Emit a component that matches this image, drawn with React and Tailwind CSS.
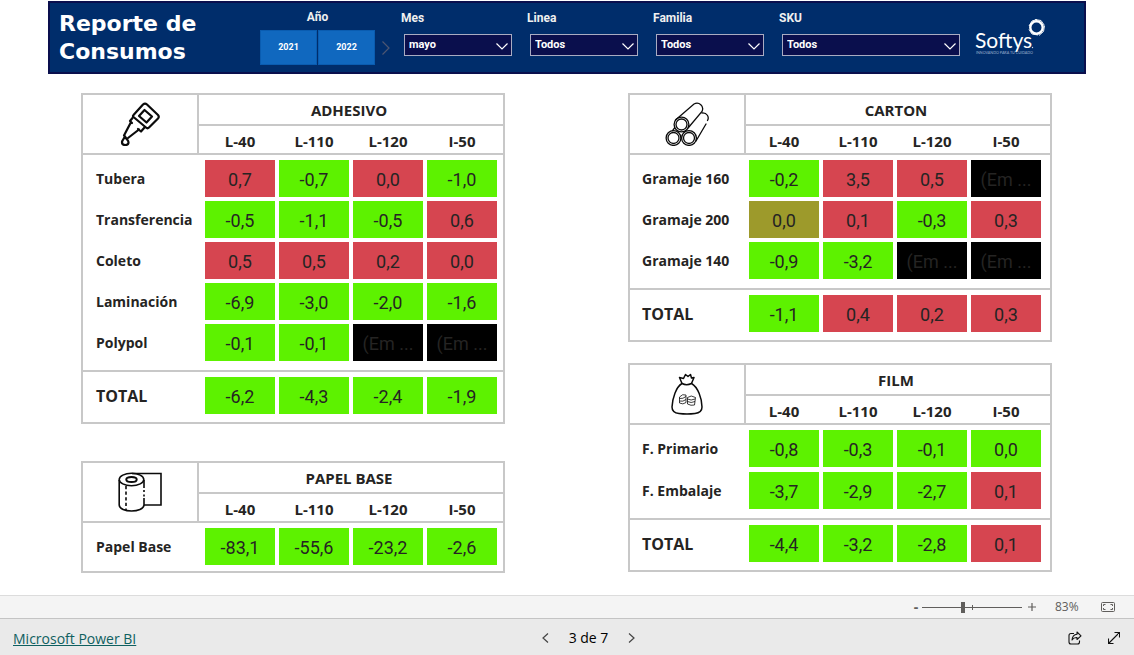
import React from "react";

const GREEN = "bg-[#5df200]";
const RED = "bg-[#d64550]";
const OLIVE = "bg-[#9d9a2b]";
const BLACK = "bg-black";
const tones = { g: GREEN, r: RED, o: OLIVE, k: BLACK };

const LINES = ["L-40", "L-110", "L-120", "I-50"];

const leftPads = ["pl-[6px] pr-[2px]", "px-[2px]", "px-[2px]", "pl-[2px] pr-[6px]"];
const rightPads = ["pl-[3px] pr-[2px]", "px-[2px]", "px-[2px]", "pl-[2px] pr-[9px]"];

const leftCols = ["w-[18.57%]", "w-[17.62%]", "w-[17.62%]"];
const rightCols = ["w-[17.86%]", "w-[17.62%]", "w-[17.62%]"];

function GlueIcon() {
  return (
    <svg viewBox="0 0 40 44" className="h-11 w-10" fill="none" stroke="#0b0b0b" strokeWidth="2.2" strokeLinejoin="round" strokeLinecap="round" aria-hidden="true">
      <path d="M13.500 13 L23 2.500 Q25 0.800 27 2.500 L38 13 Q39.500 14.700 38 16.500 L29 25.500 Q27.500 27 26 25.500 L13.500 15 Q12.500 14 13.500 13z" />
      <path d="M24.500 8 L32 14.500 L26.500 20.500 L19 14z" />
      <path d="M12.500 16 L10 19 L12 21 M18 27 L21 29.500 L24.500 25.500 M10.800 20.500 L4 33.500 M19 27.500 L8 36" />
      <path d="M5 34.500 C4 37 2 38 2 40.200 C2 44 8.500 44 8.500 40.200 C8.500 38 6 37 5 34.500z" />
    </svg>
  );
}

function RollIcon() {
  return (
    <svg viewBox="0 0 44 40" className="h-10 w-11" fill="none" stroke="#0b0b0b" strokeWidth="1.600" aria-hidden="true">
      <ellipse cx="13.500" cy="7.500" rx="12.300" ry="6.200" />
      <ellipse cx="13.500" cy="7.500" rx="5.200" ry="2.500" strokeWidth="2" />
      <path d="M1.200 8 V33 C1.500 41 25.500 41 26 33 V26 M26 8 V16 M26 18 V20 M26 22.500 V24.500" />
      <path d="M14 1.500 H43 V33 H26" />
      <path d="M8 14 V38" strokeDasharray="3.200 2.400" />
    </svg>
  );
}

function TubesIcon() {
  return (
    <svg viewBox="0 0 44 44" className="h-11 w-11" fill="none" stroke="#0b0b0b" strokeWidth="1.300" strokeLinecap="round" aria-hidden="true">
      {[[16.500, 22.500], [8.500, 36], [24, 36]].map(([x, y]) => (
        <g key={x}>
          <circle cx={x} cy={y} r="7.400" />
          <circle cx={x} cy={y} r="5.500" />
        </g>
      ))}
      <path d="M10.500 18 L29 2 C34 -0.500 39.500 4 37 9.500 L23.500 25.500" />
      <path d="M37 11 C42 10.500 44.500 15 42.500 18.500 M41 22 L31 39 M7.500 28.600 L9.500 26" />
    </svg>
  );
}

function BagIcon() {
  return (
    <svg viewBox="0 0 32 42" className="h-[42px] w-8" fill="none" stroke="#0b0b0b" strokeWidth="1.500" strokeLinejoin="round" aria-hidden="true">
      <path d="M11 10.500 L8.500 4.500 L12.500 5.500 L14.500 1.500 L17 3.500 L19.500 1.500 L20.500 5 L23 4.500 L20.500 10.500" />
      <path d="M11 10.500 Q15.500 13 20.500 10.500 C27 14 31 26 31 34 C31 38 28 40 24 40.500 Q16 41.500 8 40.500 C3.500 40 1 38 1 34 C1.500 25 5 14 11 10.500z" />
      <path d="M8.500 24 Q11.500 20.500 15 22 V29.500 Q12 32 8.500 30z M8.500 25.500 Q12 26 15 23.500 M8.500 28 Q12 29 15 26.500 M16.500 24.500 Q20 21.500 24.500 24.500 L23.500 32 Q20 33 16.500 31z M16.500 26 Q20 28 24 26 M16.500 28.500 Q20 30.500 24 28.500" strokeWidth="0.800" />
    </svg>
  );
}

function Panel({ title, icon, rows, total, side, roomy }) {
  const pads = side === "left" ? leftPads : rightPads;
  const cols = side === "left" ? leftCols : rightCols;
  const indent = side === "left" ? "pl-[13px]" : "pl-3";

  const cells = (values, vertical) =>
    values.map(([text, tone], i) => (
      <td key={i} className={`${vertical} ${pads[i]}`}>
        <div className={`flex h-[37px] items-center justify-center whitespace-nowrap pt-0.5 font-[Roboto,sans-serif] text-lg text-[#252423] ${tones[tone]}`}>
          {text}
        </div>
      </td>
    ));

  return (
    <table className="w-full table-fixed border-separate border-spacing-0 border-2 border-[#c8c8c8] text-[#252423]">
      <colgroup>
        <col className="w-[27.62%]" />
        {cols.map((c, i) => (
          <col key={i} className={c} />
        ))}
        <col />
      </colgroup>
      <thead className="text-[15px] leading-5">
        <tr>
          <td rowSpan={2} className="border-r-2 border-b-2 border-[#c8c8c8] p-0">
            <div className="flex justify-center">{icon}</div>
          </td>
          <th colSpan={4} scope="colgroup" className="h-[31px] border-b-2 border-[#c8c8c8] p-0 pr-1 font-bold">
            {title}
          </th>
        </tr>
        <tr>
          {LINES.map((l, i) => (
            <th key={l} scope="col" className={`h-[29px] border-b-2 border-[#c8c8c8] pt-0.5 pb-0 font-bold ${pads[i]}`}>
              {l}
            </th>
          ))}
        </tr>
      </thead>
      <tbody>
        {rows.map(([name, values], i) => {
          const top = i === 0 ? "pt-[5px]" : "pt-[2px]";
          const bottom = i === rows.length - 1 ? (total ? "pb-[9px]" : "pb-[6px]") : roomy ? "pb-[3px]" : "pb-[2px]";
          return (
            <tr key={name}>
              <th scope="row" className={`pr-0 text-left text-sm font-bold whitespace-nowrap ${indent} ${top} ${bottom}`}>
                {name}
              </th>
              {cells(values, `${top} ${bottom}`)}
            </tr>
          );
        })}
      </tbody>
      {total && (
        <tfoot>
          <tr>
            <th scope="row" className={`border-t-2 border-[#c8c8c8] pt-[5px] pr-0 pb-2 text-left text-base font-bold ${indent}`}>
              TOTAL
            </th>
            {cells(total, "border-t-2 border-[#c8c8c8] pt-[5px] pb-2")}
          </tr>
        </tfoot>
      )}
    </table>
  );
}

function Slicer({ id, label, value, grow }) {
  return (
    <div className={`min-w-0 pt-[7px] ${grow}`}>
      <label htmlFor={id} className="block text-xs leading-4 font-bold text-[#f0f0f0]">
        {label}
      </label>
      <div className="relative mt-2 ml-[3px]">
        <select
          id={id}
          defaultValue={value}
          className="block h-[22px] w-full appearance-none border border-[#a9acc2] bg-[#0a0f4d] pl-1 text-[11px] font-bold text-white"
        >
          <option>{value}</option>
        </select>
        <svg viewBox="0 0 12 7" className="pointer-events-none absolute top-[9px] right-1 h-[7px] w-3" fill="none" stroke="#fff" strokeWidth="1.200" aria-hidden="true">
          <path d="M0.500 0.500 L6 6 L11.500 0.500" />
        </svg>
      </div>
    </div>
  );
}

function SoftysLogo() {
  return (
    <svg viewBox="0 0 72 40" className="h-10 w-[72px] shrink-0" role="img" aria-label="Softys">
      <text x="0" y="31" fill="#fff" fontFamily="Lato, sans-serif" fontSize="21">Softys</text>
      <circle cx="57.500" cy="30.500" r="0.700" fill="#c8d3e4" />
      <text x="1" y="37" fill="#9fb2cf" fontFamily="Lato, sans-serif" fontSize="3.700">INNOVANDO PARA TU CUIDADO</text>
      <circle cx="61.500" cy="10.500" r="6.200" fill="none" stroke="#fff" strokeWidth="2.400" />
      <path d="M54 9 L57 4 L62 2.500 M60 2.500 L66 3.500 L69.500 8.500 M69.500 9 L68.500 14.500 L64 18.500 M63 18 L57 17 L54 12.500" fill="none" stroke="#fff" strokeWidth="0.900" />
    </svg>
  );
}

export default function App() {
  return (
    <div className="flex min-h-screen flex-col bg-white font-['Open_Sans',sans-serif]">
      <header className="mx-12 mt-px flex h-[73px] border-2 border-[#0a0f4d] bg-[#002d6b] pr-[37px] pl-[9px] font-[Roboto,sans-serif]">
        <h1 className="w-[201px] shrink-0 pt-[7px] font-['DejaVu_Sans',sans-serif] text-[22px] leading-7 font-bold text-white">
          Reporte de Consumos
        </h1>
        <div className="w-[115px] shrink-0 pt-[6px]" role="group" aria-labelledby="year">
          <div id="year" className="text-center text-xs leading-4 font-bold text-[#f0f0f0]">Año</div>
          <div className="mt-[5px] flex gap-px">
            {["2021", "2022"].map((y) => (
              <button key={y} type="button" className="h-[35px] flex-1 border border-[#0a5cb0] bg-[#1068bf] text-[9px] font-bold text-white">
                {y}
              </button>
            ))}
          </div>
        </div>
        <button type="button" aria-label="Siguiente" className="mt-[38px] ml-[7px] h-[14px] w-2 shrink-0">
          <svg viewBox="0 0 8 14" className="h-[14px] w-2" fill="none" stroke="#4d5672" strokeWidth="1.200">
            <path d="M0.500 0.500 L7 7 L0.500 13.500" />
          </svg>
        </button>
        <div className="ml-[11px] flex min-w-0 flex-1 gap-[15px]">
          <Slicer id="mes" label="Mes" value="mayo" grow="flex-[111_1_0]" />
          <Slicer id="linea" label="Linea" value="Todos" grow="flex-[111_1_0]" />
          <Slicer id="familia" label="Familia" value="Todos" grow="flex-[111_1_0]" />
          <Slicer id="sku" label="SKU" value="Todos" grow="flex-[181_1_0]" />
          <div className="pt-[14px]">
            <SoftysLogo />
          </div>
        </div>
      </header>

      <main className="grid flex-1 grid-cols-2 gap-x-[123px] pt-[19px] pr-[82px] pb-5 pl-[81px]">
        <div className="flex flex-col gap-[37px]">
          <Panel
            side="left"
            title="ADHESIVO"
            icon={<GlueIcon />}
            rows={[
              ["Tubera", [["0,7", "r"], ["-0,7", "g"], ["0,0", "r"], ["-1,0", "g"]]],
              ["Transferencia", [["-0,5", "g"], ["-1,1", "g"], ["-0,5", "g"], ["0,6", "r"]]],
              ["Coleto", [["0,5", "r"], ["0,5", "r"], ["0,2", "r"], ["0,0", "r"]]],
              ["Laminación", [["-6,9", "g"], ["-3,0", "g"], ["-2,0", "g"], ["-1,6", "g"]]],
              ["Polypol", [["-0,1", "g"], ["-0,1", "g"], ["(Em ...", "k"], ["(Em ...", "k"]]],
            ]}
            total={[["-6,2", "g"], ["-4,3", "g"], ["-2,4", "g"], ["-1,9", "g"]]}
          />
          <Panel
            side="left"
            title="PAPEL BASE"
            icon={<RollIcon />}
            rows={[["Papel Base", [["-83,1", "g"], ["-55,6", "g"], ["-23,2", "g"], ["-2,6", "g"]]]]}
          />
        </div>
        <div className="flex flex-col gap-[21px]">
          <Panel
            side="right"
            title="CARTON"
            icon={<TubesIcon />}
            rows={[
              ["Gramaje 160", [["-0,2", "g"], ["3,5", "r"], ["0,5", "r"], ["(Em ...", "k"]]],
              ["Gramaje 200", [["0,0", "o"], ["0,1", "r"], ["-0,3", "g"], ["0,3", "r"]]],
              ["Gramaje 140", [["-0,9", "g"], ["-3,2", "g"], ["(Em ...", "k"], ["(Em ...", "k"]]],
            ]}
            total={[["-1,1", "g"], ["0,4", "r"], ["0,2", "r"], ["0,3", "r"]]}
          />
          <Panel
            side="right"
            roomy
            title="FILM"
            icon={<BagIcon />}
            rows={[
              ["F. Primario", [["-0,8", "g"], ["-0,3", "g"], ["-0,1", "g"], ["0,0", "g"]]],
              ["F. Embalaje", [["-3,7", "g"], ["-2,9", "g"], ["-2,7", "g"], ["0,1", "r"]]],
            ]}
            total={[["-4,4", "g"], ["-3,2", "g"], ["-2,8", "g"], ["0,1", "r"]]}
          />
        </div>
      </main>

      <div className="flex h-[23px] items-center justify-end border-t border-[#dcdcdc] bg-[#f4f4f4] pr-[19px] text-[#605e5c]">
        <button type="button" aria-label="Alejar" className="w-[10px] pr-0.5 text-sm leading-4 font-bold">-</button>
        <div className="relative flex w-[100px] items-center">
          <input
            type="range"
            aria-label="Zoom"
            min="0"
            max="100"
            defaultValue="41"
            className="h-3 w-full appearance-none bg-transparent [&::-webkit-slider-runnable-track]:h-px [&::-webkit-slider-runnable-track]:bg-[#605e5c] [&::-webkit-slider-thumb]:-mt-[5px] [&::-webkit-slider-thumb]:h-[11px] [&::-webkit-slider-thumb]:w-1 [&::-webkit-slider-thumb]:appearance-none [&::-webkit-slider-thumb]:bg-[#605e5c]"
          />
          <span className="pointer-events-none absolute left-1/2 h-[5px] w-px bg-[#605e5c]" />
        </div>
        <button type="button" aria-label="Acercar" className="ml-1.5 flex h-4 w-2 items-center">
          <svg viewBox="0 0 8 8" className="size-2" stroke="#605e5c" strokeWidth="1.200" aria-hidden="true"><path d="M4 0 V8 M0 4 H8" /></svg>
        </button>
        <span className="ml-[19px] w-6 text-xs leading-4">83%</span>
        <button type="button" aria-label="Ajustar a la página" className="ml-[22px]">
          <svg viewBox="0 0 14 10" className="h-[10px] w-[14px]" fill="none" stroke="#605e5c" strokeWidth="1" aria-hidden="true">
            <rect x="0.500" y="0.500" width="13" height="9" rx="1" />
            <path d="M2.500 4 V2.500 H4.500 M9.500 2.500 H11.500 V4 M11.500 6 V7.500 H9.500 M4.500 7.500 H2.500 V6" />
          </svg>
        </button>
      </div>

      <footer className="grid h-[37px] grid-cols-[12fr_auto_11fr] items-center border-t border-[#c4c4c4] bg-[#eaeaea] pr-[14px] pl-[13px] text-sm leading-5">
        <a href="#powerbi" className="justify-self-start pt-1 text-[#0f6060] underline">Microsoft Power BI</a>
        <nav className="flex items-center gap-5 pt-0.5" aria-label="Páginas">
          <button type="button" aria-label="Anterior">
            <svg viewBox="0 0 7 10" className="h-[10px] w-[7px]" fill="none" stroke="#444" strokeWidth="1.200"><path d="M6 0.500 L1 5 L6 9.500" /></svg>
          </button>
          <span className="text-black">3 de 7</span>
          <button type="button" aria-label="Siguiente página">
            <svg viewBox="0 0 7 10" className="h-[10px] w-[7px]" fill="none" stroke="#444" strokeWidth="1.200"><path d="M1 0.500 L6 5 L1 9.500" /></svg>
          </button>
        </nav>
        <div className="flex items-center gap-[26px] justify-self-end pt-0.5">
          <button type="button" aria-label="Compartir">
            <svg viewBox="0 0 14 14" className="size-[14px]" fill="none" stroke="#111" strokeWidth="1.100" strokeLinejoin="round" aria-hidden="true">
              <path d="M6 2.500 H3 Q1 2.500 1 4.500 V11 Q1 13 3 13 H9.500 Q11.500 13 11.500 11 V9.500" />
              <path d="M9 1 L13 4.800 L9 8.500 V6.500 Q5.500 6.300 4 9 Q4.500 3.500 9 3.200z" />
            </svg>
          </button>
          <button type="button" aria-label="Pantalla completa">
            <svg viewBox="0 0 12 12" className="size-3" fill="none" stroke="#111" strokeWidth="1.100" aria-hidden="true">
              <path d="M0.500 11.500 L11.500 0.500 M6.500 0.500 H11.500 V5.500 M0.500 6.500 V11.500 H5.500" />
            </svg>
          </button>
        </div>
      </footer>
    </div>
  );
}
